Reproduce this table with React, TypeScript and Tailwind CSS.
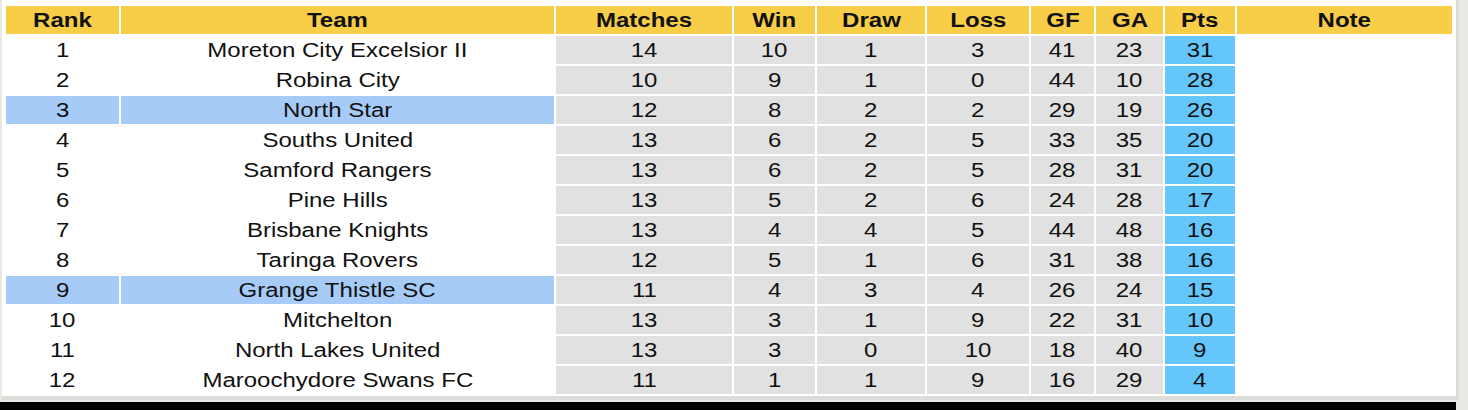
import React from 'react';

type Row = { rank: number; team: string; m: number; w: number; d: number; l: number; gf: number; ga: number; pts: number; hl?: boolean };

const rows: Row[] = [
  { rank: 1, team: 'Moreton City Excelsior II', m: 14, w: 10, d: 1, l: 3, gf: 41, ga: 23, pts: 31 },
  { rank: 2, team: 'Robina City', m: 10, w: 9, d: 1, l: 0, gf: 44, ga: 10, pts: 28 },
  { rank: 3, team: 'North Star', m: 12, w: 8, d: 2, l: 2, gf: 29, ga: 19, pts: 26, hl: true },
  { rank: 4, team: 'Souths United', m: 13, w: 6, d: 2, l: 5, gf: 33, ga: 35, pts: 20 },
  { rank: 5, team: 'Samford Rangers', m: 13, w: 6, d: 2, l: 5, gf: 28, ga: 31, pts: 20 },
  { rank: 6, team: 'Pine Hills', m: 13, w: 5, d: 2, l: 6, gf: 24, ga: 28, pts: 17 },
  { rank: 7, team: 'Brisbane Knights', m: 13, w: 4, d: 4, l: 5, gf: 44, ga: 48, pts: 16 },
  { rank: 8, team: 'Taringa Rovers', m: 12, w: 5, d: 1, l: 6, gf: 31, ga: 38, pts: 16 },
  { rank: 9, team: 'Grange Thistle SC', m: 11, w: 4, d: 3, l: 4, gf: 26, ga: 24, pts: 15, hl: true },
  { rank: 10, team: 'Mitchelton', m: 13, w: 3, d: 1, l: 9, gf: 22, ga: 31, pts: 10 },
  { rank: 11, team: 'North Lakes United', m: 13, w: 3, d: 0, l: 10, gf: 18, ga: 40, pts: 9 },
  { rank: 12, team: 'Maroochydore Swans FC', m: 11, w: 1, d: 1, l: 9, gf: 16, ga: 29, pts: 4 },
];

// the screenshot is stretched sideways, so text gets a horizontal scale
function T({ children }: { children: React.ReactNode }) {
  return <span className="inline-block scale-x-[1.2]">{children}</span>;
}

function Cell({ children, bg }: { children: React.ReactNode; bg: string }) {
  return (
    <td className={`h-[28px] p-0 text-center align-middle ${bg}`}>
      <T>{children}</T>
    </td>
  );
}

const heads = ['Rank', 'Team', 'Matches', 'Win', 'Draw', 'Loss', 'GF', 'GA', 'Pts', 'Note'];
const widths = ['w-[113px]', 'w-[433px]', 'w-[176px]', 'w-[81px]', 'w-[108px]', 'w-[102px]', 'w-[63px]', 'w-[67px]', 'w-[70px]', 'w-[215px]'];

export default function App() {
  return (
    <div className="h-[410px] w-full overflow-hidden bg-[#e9e9e4] font-['Liberation_Sans',Arial,sans-serif] text-[20px] leading-none text-[#111]">
      <div className="ml-[2px] w-[1457px] border-r-[3px] border-b-[4px] border-[#dcdcd8] bg-white pl-[2px] pt-[4px]">
        <table className="table-fixed border-separate border-spacing-[2px]">
          <colgroup>
            {widths.map((w, i) => (
              <col key={i} className={w} />
            ))}
          </colgroup>
          <thead>
            <tr>
              {heads.map((h) => (
                <th key={h} className="h-[28px] bg-[#f8cd47] p-0 text-center align-middle font-bold">
                  <T>{h}</T>
                </th>
              ))}
            </tr>
          </thead>
          <tbody>
            {rows.map((r) => {
              const left = r.hl ? 'bg-[#a7cbf7]' : 'bg-white';
              const grey = 'bg-[#e1e1e1]';
              return (
                <tr key={r.rank}>
                  <Cell bg={left}>{r.rank}</Cell>
                  <Cell bg={left}>{r.team}</Cell>
                  <Cell bg={grey}>{r.m}</Cell>
                  <Cell bg={grey}>{r.w}</Cell>
                  <Cell bg={grey}>{r.d}</Cell>
                  <Cell bg={grey}>{r.l}</Cell>
                  <Cell bg={grey}>{r.gf}</Cell>
                  <Cell bg={grey}>{r.ga}</Cell>
                  <Cell bg="bg-[#64c6fa]">{r.pts}</Cell>
                  <td className="h-[28px] p-0 bg-white" />
                </tr>
              );
            })}
          </tbody>
        </table>
      </div>
      <div className="mt-[2px] h-[8px] w-[1456px] bg-black" />
    </div>
  );
}
